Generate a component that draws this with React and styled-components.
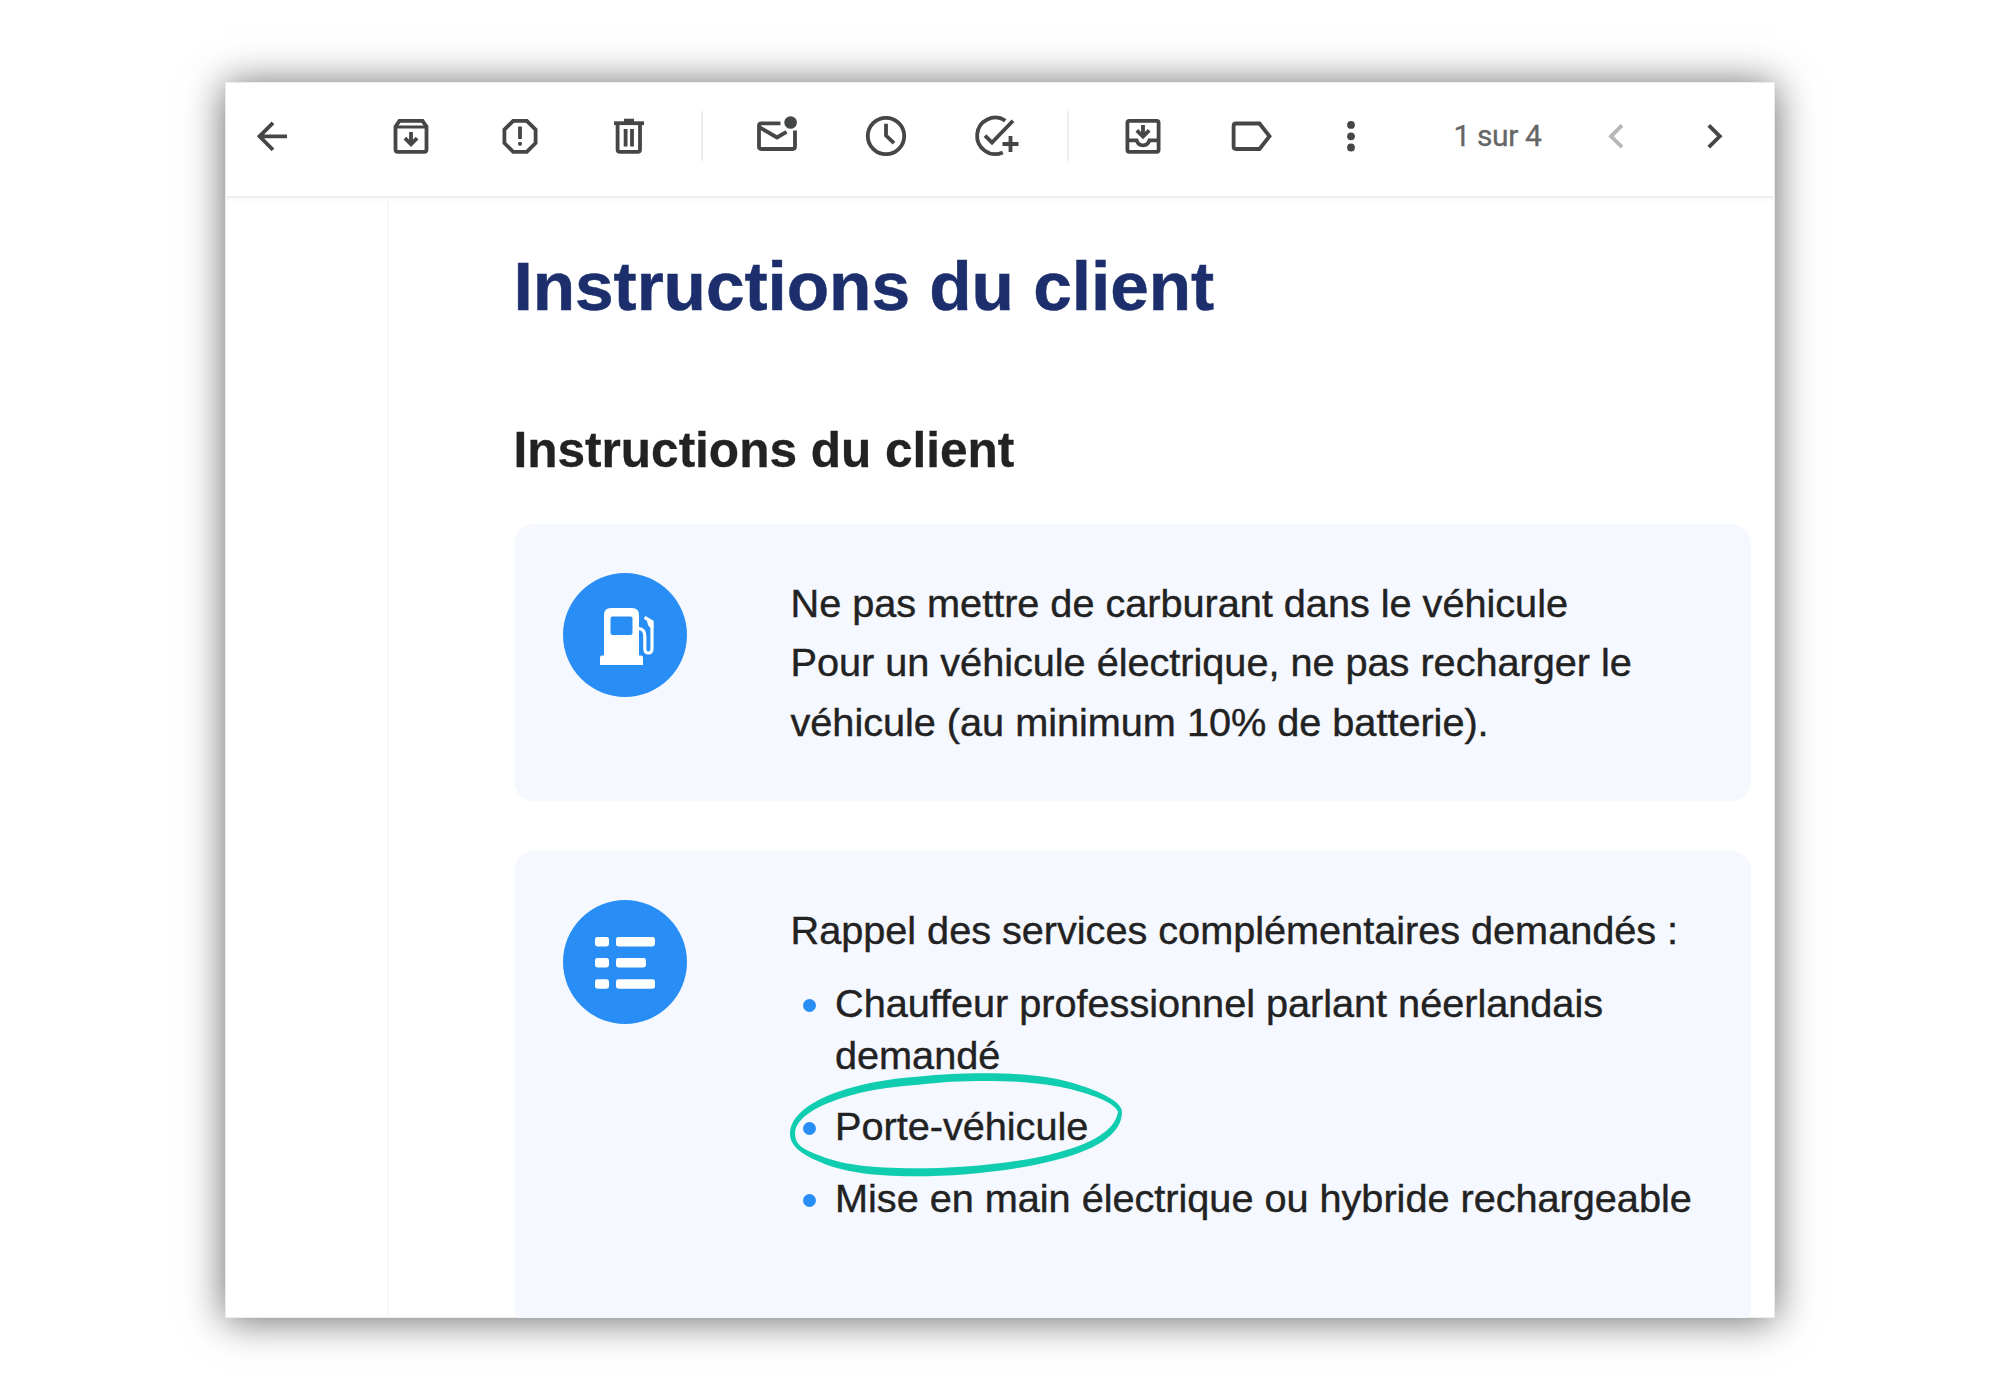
import React from "react";
import styled, { createGlobalStyle } from "styled-components";

const services = [
  { label: "Chauffeur professionnel parlant néerlandais demandé" },
  { label: "Porte-véhicule", circled: true },
  { label: "Mise en main électrique ou hybride rechargeable" },
];

const App = () => {
  return (
    <>
      <GlobalStyle />
      <Page>
        <MailWindow>
          <Toolbar>
            <IconButton $width={94} $after={37} aria-label="Retour">
              <BackIcon />
            </IconButton>
            <IconButton aria-label="Archiver">
              <ArchiveIcon />
            </IconButton>
            <IconButton aria-label="Signaler comme spam">
              <SpamIcon />
            </IconButton>
            <IconButton aria-label="Supprimer">
              <TrashIcon />
            </IconButton>
            <Divider />
            <IconButton aria-label="Marquer comme non lu">
              <UnreadIcon />
            </IconButton>
            <IconButton aria-label="Mettre en attente">
              <ClockIcon />
            </IconButton>
            <IconButton aria-label="Ajouter à Tasks">
              <TaskIcon />
            </IconButton>
            <Divider />
            <IconButton aria-label="Déplacer vers">
              <MoveIcon />
            </IconButton>
            <IconButton aria-label="Libellés">
              <LabelIcon />
            </IconButton>
            <IconButton $width={89} aria-label="Plus">
              <MoreIcon />
            </IconButton>
            <Counter>1 sur 4</Counter>
            <IconButton $width={98} $color="#b5b6b6" aria-label="Plus récents">
              <Chevron d="M31 13.4 L20 24.3 L31 35.2" />
            </IconButton>
            <IconButton $width={98} aria-label="Plus anciens">
              <Chevron d="M19.8 13.4 L30.8 24.3 L19.8 35.2" />
            </IconButton>
          </Toolbar>
          <Body>
            <Gutter />
            <Message>
              <Title>Instructions du client</Title>
              <Subtitle>Instructions du client</Subtitle>
              <Card $height={277}>
                <Badge>
                  <PumpIcon />
                </Badge>
                <CardText>
                  <p>
                    Ne pas mettre de carburant dans le véhicule
                    <br />
                    Pour un véhicule électrique, ne pas recharger le véhicule
                    (au minimum 10% de batterie).
                  </p>
                </CardText>
              </Card>
              <Card $height={477}>
                <Badge>
                  <ListIcon />
                </Badge>
                <CardText>
                  <p>Rappel des services complémentaires demandés :</p>
                  <ServiceList>
                    {services.map((item) => (
                      <ServiceItem key={item.label}>
                        {item.label}
                        {item.circled && <HandCircle />}
                      </ServiceItem>
                    ))}
                  </ServiceList>
                </CardText>
              </Card>
            </Message>
          </Body>
        </MailWindow>
      </Page>
    </>
  );
};

export default App;

const BackIcon = () => (
  <Icon>
    <path d="M39 24.3 H12 M25 10.8 L11.5 24.3 L25 37.8" />
  </Icon>
);

const ArchiveIcon = () => (
  <Icon>
    <path d="M8.5 14.5 L12.5 8.8 H35.5 L39.5 14.5 V37.5 Q39.5 39.8 37.2 39.8 H10.8 Q8.5 39.8 8.5 37.5 Z" />
    <path d="M8.5 15 H39.5" strokeWidth="3" />
    <path d="M24 20 V32 M17.9 26.2 L24 32.3 L30.1 26.2" />
  </Icon>
);

const SpamIcon = () => (
  <Icon>
    <path d="M17.2 8.8 H30.8 L39.6 17.6 V31 L30.8 39.8 H17.2 L8.4 31 V17.6 Z" />
    <path d="M24 14.5 V27" />
    <circle cx="24" cy="31.8" r="2.1" fill="currentColor" stroke="none" />
  </Icon>
);

const TrashIcon = () => (
  <Icon>
    <path d="M9 11.2 H39" />
    <path d="M19 8.6 H29" />
    <path d="M12.6 11 V37.4 Q12.6 39.8 15 39.8 H32.6 Q35 39.8 35 37.4 V11" />
    <path d="M20.6 17 V34.4 M27 17 V34.4" />
  </Icon>
);

const UnreadIcon = () => (
  <Icon>
    <path d="M27.5 11.4 H8.4 Q6 11.4 6 13.8 V34.6 Q6 37 8.4 37 H39.6 Q42 37 42 34.6 V18.5" />
    <path d="M6 15 L24 25.5 L33.5 19.8" />
    <circle cx="37.6" cy="10.5" r="6.3" fill="currentColor" stroke="none" />
  </Icon>
);

const ClockIcon = () => (
  <Icon>
    <circle cx="24" cy="24" r="18.2" />
    <path d="M24 11.8 V23.5 L32 31.2" />
  </Icon>
);

const TaskIcon = () => (
  <Icon>
    <path d="M34.3 8.6 A18.2 18.2 0 1 0 31.8 40.4" />
    <path d="M14 23.6 L21 30.6 L42 8.8" />
    <path d="M31.5 32 H47.5 M39.5 24 V40" />
  </Icon>
);

const MoveIcon = () => (
  <Icon>
    <rect x="8.4" y="8.8" width="31.2" height="31" rx="2" />
    <path d="M24 13 V24.4 M17.8 18.4 L24 24.6 L30.2 18.4" />
    <path d="M8.4 28.3 H17.6 Q19.2 33.4 24 33.4 Q28.8 33.4 30.4 28.3 H39.6" />
  </Icon>
);

const LabelIcon = () => (
  <Icon>
    <path d="M8 11.5 H31.5 L41.5 24.3 L31.5 37 H8 Q5.6 37 5.6 34.6 V13.9 Q5.6 11.5 8 11.5 Z" />
  </Icon>
);

const MoreIcon = () => (
  <Icon>
    <g fill="currentColor" stroke="none">
      <circle cx="24" cy="12.9" r="3.9" />
      <circle cx="24" cy="24.3" r="3.9" />
      <circle cx="24" cy="35.5" r="3.9" />
    </g>
  </Icon>
);

const Chevron = ({ d }) => (
  <Icon>
    <path d={d} />
  </Icon>
);

const Icon = ({ children }) => (
  <IconSvg viewBox="0 0 48 48">{children}</IconSvg>
);

const PumpIcon = () => (
  <BadgeSvg viewBox="0 0 124 124">
    <path
      fill="#fff"
      fillRule="evenodd"
      d="M48 35 H69 Q76 35 76 42 V82.5 H78 Q80 82.5 80 84.5 V92 H37 V84.5 Q37 82.5 39 82.5 H41 V42 Q41 35 48 35 Z M49.5 43.5 Q47.5 43.5 47.5 45.5 V60 Q47.5 62 49.5 62 H67.5 Q69.5 62 69.5 60 V45.5 Q69.5 43.5 67.5 43.5 Z"
    />
    <path
      fill="none"
      stroke="#fff"
      strokeWidth="3.2"
      d="M75.5 55.5 Q81.8 56 81.8 63 V75.5 Q81.8 80 85.3 80 Q89 80 89 75.5 V49 L81.5 44.5"
    />
    <path fill="#fff" d="M82.5 43 L90.4 48 V56 Q85 54.5 84.5 50 Z" />
  </BadgeSvg>
);

const ListIcon = () => (
  <BadgeSvg viewBox="0 0 124 124">
    <g fill="#fff">
      <rect x="32" y="37" width="14" height="9.4" rx="2.4" />
      <rect x="53" y="37" width="39" height="9.4" rx="2.4" />
      <rect x="32" y="58" width="14" height="9.4" rx="2.4" />
      <rect x="53" y="58" width="30" height="9.4" rx="2.4" />
      <rect x="32" y="79.3" width="14" height="9.4" rx="2.4" />
      <rect x="53" y="79.3" width="39" height="9.4" rx="2.4" />
    </g>
  </BadgeSvg>
);

// pen stroke thickens along the top and bottom, thins at both ends
const HandCircle = () => (
  <HandCircleSvg viewBox="0 0 332 104">
    <path
      fill="#11cdb0"
      fillRule="evenodd"
      d="M0 61 C0 43 20 29 46 19.5 C74 9.5 100 6 124 4 C155 1 170 0.3 197 0.3 C240 0.3 268 5 289 12 C315 20 332 30 332 39 C332 62 304 78 262 88 C222 98 170 103.3 125 103.3 C80 103.3 50 98 30 89 C10 81 0 72 0 61 Z
      M5 61 C5 72 14 77 31 83 C50 91 80 95.3 125 95.3 C170 95.3 230 90 268 79.5 C300 71 325 58 328 39 C326 31 305 22 280 16 C258 11 235 8 195 8 C170 8 155 9 128 11.8 C105 13.5 85 16 62 22 C30 31 5 44 5 61 Z"
    />
  </HandCircleSvg>
);

const GlobalStyle = createGlobalStyle`
  * {
    box-sizing: border-box;
  }
  body {
    margin: 0;
    background: #fff;
    font-family: "Liberation Sans", Arial, sans-serif;
  }
  h1, h2, p, ul {
    margin: 0;
    padding: 0;
  }
`;

const Page = styled.div`
  width: 2000px;
  height: 1400px;
  padding: 82px 225px;
  overflow: hidden;
`;

const MailWindow = styled.div`
  display: flex;
  flex-direction: column;
  width: 1550px;
  height: 1236px;
  background: #fff;
  box-shadow: 0 2px 38px rgba(0, 0, 0, 0.6), inset 0 0 0 1px #ececec;
`;

const Toolbar = styled.div`
  display: flex;
  flex: none;
  align-items: center;
  height: 116px;
  padding-bottom: 6px;
  border-bottom: 2px solid #efefef;
  box-shadow: 0 2px 4px rgba(0, 0, 0, 0.03);
`;

const IconButton = styled.button`
  display: flex;
  flex: none;
  align-items: center;
  justify-content: center;
  width: ${({ $width }) => $width || 109}px;
  height: 60px;
  margin: 0 ${({ $after }) => $after || 0}px 0 0;
  padding: 0;
  border: none;
  background: none;
  color: ${({ $color }) => $color || "#444746"};
`;

const IconSvg = styled.svg`
  width: 48px;
  height: 48px;
  fill: none;
  stroke: currentColor;
  stroke-width: 3.8;
  overflow: visible;
`;

const Divider = styled.div`
  flex: none;
  width: 2px;
  height: 50px;
  margin: 0 19.5px 0 17.5px;
  background: #eeefef;
`;

const Counter = styled.span`
  flex: none;
  width: 171px;
  padding: 0 0 2px 58.5px;
  color: #666;
  font-family: Roboto, sans-serif;
  font-size: 30px;
  letter-spacing: -0.4px;
  white-space: nowrap;
  -webkit-text-stroke: 0.3px currentColor;
`;

const Body = styled.div`
  display: flex;
  flex: 1;
  min-height: 0;
  overflow: hidden;
`;

const Gutter = styled.div`
  flex: none;
  width: 164px;
  border-right: 2px solid #f5f7fb;
`;

const Message = styled.div`
  flex: none;
  width: 1362px;
  padding: 43px 0 0 124.5px;
`;

const Title = styled.h1`
  color: #1c2f6c;
  font-size: 69.4px;
  line-height: 90px;
  letter-spacing: -0.05px;
  -webkit-text-stroke: 0.5px currentColor;
`;

const Subtitle = styled.h2`
  margin: 88px 0 43px;
  color: #222;
  font-size: 49.6px;
  line-height: 62px;
  letter-spacing: -0.03px;
  -webkit-text-stroke: 0.3px currentColor;
`;

const Card = styled.section`
  display: flex;
  height: ${({ $height }) => $height}px;
  margin-bottom: 50px;
  padding: 49px 49.5px;
  border-radius: 20px;
  background: #f5f8ff;
`;

const Badge = styled.div`
  flex: none;
  width: 124px;
  height: 124px;
  margin-right: 103.5px;
  border-radius: 50%;
  background: #288ef6;
`;

const BadgeSvg = styled.svg`
  display: block;
  width: 124px;
  height: 124px;
`;

const CardText = styled.div`
  flex: none;
  width: 920px;
  padding-top: 0.7px;
  color: #222;
  font-size: 39.7px;
  line-height: 59.6px;
  letter-spacing: -0.03px;
  -webkit-text-stroke: 0.4px currentColor;
`;

const ServiceList = styled.ul`
  margin-top: 18px;
  list-style: none;
  line-height: 51.6px;
`;

const ServiceItem = styled.li`
  position: relative;
  margin-bottom: 20px;
  padding-left: 44.5px;

  &::before {
    content: "";
    position: absolute;
    top: 21px;
    left: 12px;
    width: 13px;
    height: 13px;
    border-radius: 50%;
    background: #288ef6;
  }
`;

const HandCircleSvg = styled.svg`
  position: absolute;
  top: -28px;
  left: -0.5px;
  width: 332px;
  height: 104px;
`;
